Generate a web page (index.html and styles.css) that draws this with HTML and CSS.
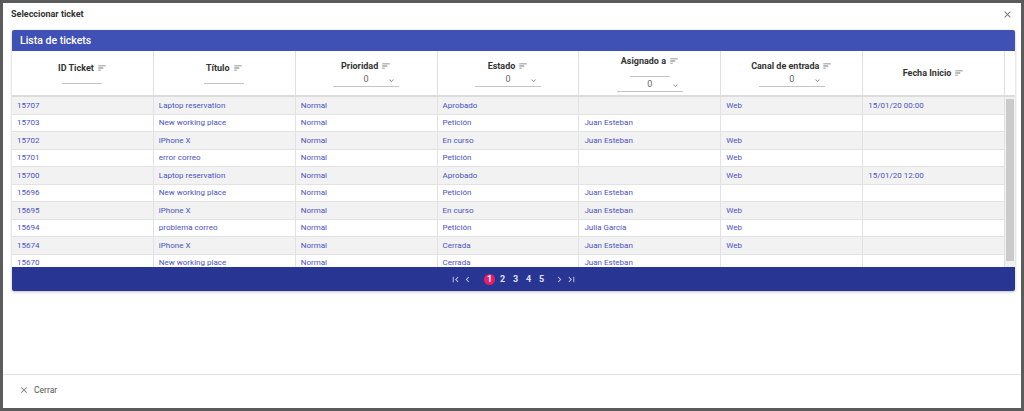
FILE: index.html
```html
<!DOCTYPE html>
<html lang="es">
<head>
<meta charset="utf-8">
<title>Seleccionar ticket</title>
<link rel="stylesheet" href="styles.css">
</head>
<body>
<div class="dialog">
  <div class="dlg-title">
    <span>Seleccionar ticket</span>
    <svg class="close" viewBox="0 0 24 24"><path d="M19 6.41L17.59 5 12 10.59 6.41 5 5 6.41 10.59 12 5 17.59 6.41 19 12 13.41 17.59 19 19 17.59 13.41 12z"/></svg>
  </div>
  <div class="dlg-content">
    <div class="card">
      <div class="card-head">Lista de tickets</div>
      <div class="thead">
        <div class="th"><div class="lbl">ID Ticket <svg class="sort" viewBox="0 0 24 24"><path d="M3 18h6v-2H3v2zM3 6v2h18V6H3zm0 7h12v-2H3v2z"/></svg></div><div class="blank"></div></div>
        <div class="th"><div class="lbl">Título <svg class="sort" viewBox="0 0 24 24"><path d="M3 18h6v-2H3v2zM3 6v2h18V6H3zm0 7h12v-2H3v2z"/></svg></div><div class="blank"></div></div>
        <div class="th"><div class="lbl">Prioridad <svg class="sort" viewBox="0 0 24 24"><path d="M3 18h6v-2H3v2zM3 6v2h18V6H3zm0 7h12v-2H3v2z"/></svg></div><div class="sel"><span>0</span><svg class="chev" viewBox="0 0 24 24"><path d="M16.59 8.59L12 13.17 7.41 8.59 6 10l6 6 6-6z"/></svg></div></div>
        <div class="th"><div class="lbl">Estado <svg class="sort" viewBox="0 0 24 24"><path d="M3 18h6v-2H3v2zM3 6v2h18V6H3zm0 7h12v-2H3v2z"/></svg></div><div class="sel"><span>0</span><svg class="chev" viewBox="0 0 24 24"><path d="M16.59 8.59L12 13.17 7.41 8.59 6 10l6 6 6-6z"/></svg></div></div>
        <div class="th"><div class="lbl">Asignado a <svg class="sort" viewBox="0 0 24 24"><path d="M3 18h6v-2H3v2zM3 6v2h18V6H3zm0 7h12v-2H3v2z"/></svg></div><div class="blank"></div><div class="sel"><span>0</span><svg class="chev" viewBox="0 0 24 24"><path d="M16.59 8.59L12 13.17 7.41 8.59 6 10l6 6 6-6z"/></svg></div></div>
        <div class="th"><div class="lbl">Canal de entrada <svg class="sort" viewBox="0 0 24 24"><path d="M3 18h6v-2H3v2zM3 6v2h18V6H3zm0 7h12v-2H3v2z"/></svg></div><div class="sel"><span>0</span><svg class="chev" viewBox="0 0 24 24"><path d="M16.59 8.59L12 13.17 7.41 8.59 6 10l6 6 6-6z"/></svg></div></div>
        <div class="th"><div class="lbl">Fecha Inicio <svg class="sort" viewBox="0 0 24 24"><path d="M3 18h6v-2H3v2zM3 6v2h18V6H3zm0 7h12v-2H3v2z"/></svg></div></div>
      </div>
      <div class="tbody">
        <div class="rows">
          <div class="tr"><div>15707</div><div>Laptop reservation</div><div>Normal</div><div>Aprobado</div><div></div><div>Web</div><div>15/01/20 00:00</div></div>
          <div class="tr"><div>15703</div><div>New working place</div><div>Normal</div><div>Petición</div><div>Juan Esteban</div><div></div><div></div></div>
          <div class="tr"><div>15702</div><div>iPhone X</div><div>Normal</div><div>En curso</div><div>Juan Esteban</div><div>Web</div><div></div></div>
          <div class="tr"><div>15701</div><div>error correo</div><div>Normal</div><div>Petición</div><div></div><div>Web</div><div></div></div>
          <div class="tr"><div>15700</div><div>Laptop reservation</div><div>Normal</div><div>Aprobado</div><div></div><div>Web</div><div>15/01/20 12:00</div></div>
          <div class="tr"><div>15696</div><div>New working place</div><div>Normal</div><div>Petición</div><div>Juan Esteban</div><div></div><div></div></div>
          <div class="tr"><div>15695</div><div>iPhone X</div><div>Normal</div><div>En curso</div><div>Juan Esteban</div><div>Web</div><div></div></div>
          <div class="tr"><div>15694</div><div>problema correo</div><div>Normal</div><div>Petición</div><div>Julia García</div><div>Web</div><div></div></div>
          <div class="tr"><div>15674</div><div>iPhone X</div><div>Normal</div><div>Cerrada</div><div>Juan Esteban</div><div>Web</div><div></div></div>
          <div class="tr"><div>15670</div><div>New working place</div><div>Normal</div><div>Cerrada</div><div>Juan Esteban</div><div></div><div></div></div>
        </div>
        <div class="vscroll"><div class="thumb"></div></div>
      </div>
      <div class="pager">
        <svg class="pico" viewBox="0 0 24 24"><path d="M18.41 16.59L13.82 12l4.59-4.59L17 6l-6 6 6 6zM6 6h2v12H6z"/></svg>
        <svg class="pico" viewBox="0 0 24 24"><path d="M15.41 7.41L14 6l-6 6 6 6 1.41-1.41L10.83 12z"/></svg>
        <div class="pages">
          <span class="pg active">1</span><span class="pg">2</span><span class="pg">3</span><span class="pg">4</span><span class="pg">5</span>
        </div>
        <svg class="pico" viewBox="0 0 24 24"><path d="M10 6L8.59 7.41 13.17 12l-4.58 4.59L10 18l6-6z"/></svg>
        <svg class="pico" viewBox="0 0 24 24"><path d="M5.59 7.41L10.18 12l-4.59 4.59L7 18l6-6-6-6zM16 6h2v12h-2z"/></svg>
      </div>
    </div>
  </div>
  <div class="dlg-footer">
    <button class="btn-close"><svg viewBox="0 0 24 24"><path d="M19 6.41L17.59 5 12 10.59 6.41 5 5 6.41 10.59 12 5 17.59 6.41 19 12 13.41 17.59 19 19 17.59 13.41 12z"/></svg>Cerrar</button>
  </div>
</div>
</body>
</html>
```
FILE: styles.css
```css
* { box-sizing: border-box; }
html, body { margin: 0; height: 100%; }
body {
  background: #5b5b5b;
  padding: 3px;
  font-family: Roboto, "Liberation Sans", Arial, sans-serif;
  color: #333;
}
.dialog {
  width: 1018px;
  height: 405px;
  background: #fff;
  display: flex;
  flex-direction: column;
}
.dlg-title {
  height: 27px;
  display: flex;
  align-items: center;
  justify-content: space-between;
  padding: 0 8px 5px 8px;
  font-size: 9px;
  font-weight: 700;
  color: #333;
}
.dlg-title .close { width: 11px; height: 11px; fill: #777; }
.dlg-content {
  flex: 1;
  padding: 0 6px 0 9px;
  border-bottom: 1px solid #e3e3e3;
}
.card {
  border-radius: 2px;
  box-shadow: 0 1px 3px rgba(0,0,0,0.25);
  overflow: hidden;
}
.card-head {
  height: 21px;
  background: #3f51b5;
  color: #fff;
  font-size: 10.5px;
  font-weight: 500;
  display: flex;
  align-items: center;
  padding-left: 8px;
}
.thead {
  display: grid;
  grid-template-columns: repeat(7, 1fr);
  padding-right: 10px;
  height: 46px;
  border-bottom: 2px solid #dcdcdc;
}
.th {
  display: flex;
  flex-direction: column;
  align-items: center;
  justify-content: center;
  border-right: 1px solid #e0e0e0;
}
.lbl {
  height: 12px;
  display: flex;
  align-items: center;
  gap: 3px;
  font-size: 9px;
  font-weight: 700;
  color: #333;
}
.sort { width: 10px; height: 10px; fill: #777; }
.blank {
  width: 40px;
  height: 10px;
  border-bottom: 1px solid #c4c4c4;
}
.sel {
  width: 66px;
  height: 14px;
  margin-top: 1px;
  border-bottom: 1px solid #c4c4c4;
  display: flex;
  align-items: center;
  justify-content: center;
  position: relative;
  font-size: 9px;
  color: #666;
}
.chev {
  width: 9px;
  height: 9px;
  fill: #888;
  position: absolute;
  right: 3px;
  top: 3px;
}
.tbody {
  height: 170px;
  display: flex;
}
.rows {
  flex: 1;
  overflow: hidden;
}
.vscroll {
  width: 10px;
  background: #f1f1f1;
  padding: 2px 1px 0 1px;
}
.thumb {
  height: 162px;
  background: #cbcbcb;
}
.tr {
  display: grid;
  grid-template-columns: repeat(7, 1fr);
  height: 17.5px;
  border-bottom: 1px solid #e2e2e2;
}
.tr:nth-child(odd) { background: #f2f2f2; }
.tr > div {
  display: flex;
  align-items: center;
  padding-left: 5px;
  font-size: 8px;
  color: #4b51c2;
  border-right: 1px solid #e2e2e2;
  white-space: nowrap;
  overflow: hidden;
}
.pager {
  height: 24px;
  background: #283593;
  display: flex;
  align-items: center;
  justify-content: center;
  gap: 1px;
}
.pico { width: 11px; height: 11px; fill: #c5cae9; }
.pages {
  display: flex;
  align-items: center;
  gap: 2px;
  margin: 0 6px 0 10px;
}
.pg {
  width: 11px;
  height: 11px;
  display: flex;
  align-items: center;
  justify-content: center;
  font-size: 9px;
  font-weight: 700;
  color: #dfe2f5;
}
.pg.active {
  background: #e91e63;
  border-radius: 50%;
  color: #fff;
}
.dlg-footer {
  height: 33px;
  display: flex;
  align-items: center;
  padding: 0 0 4px 16px;
}
.btn-close {
  background: none;
  border: 0;
  padding: 0;
  display: flex;
  align-items: center;
  gap: 5px;
  font-family: inherit;
  font-size: 8.5px;
  color: #555;
}
.btn-close svg { width: 10px; height: 10px; fill: #777; }
```
